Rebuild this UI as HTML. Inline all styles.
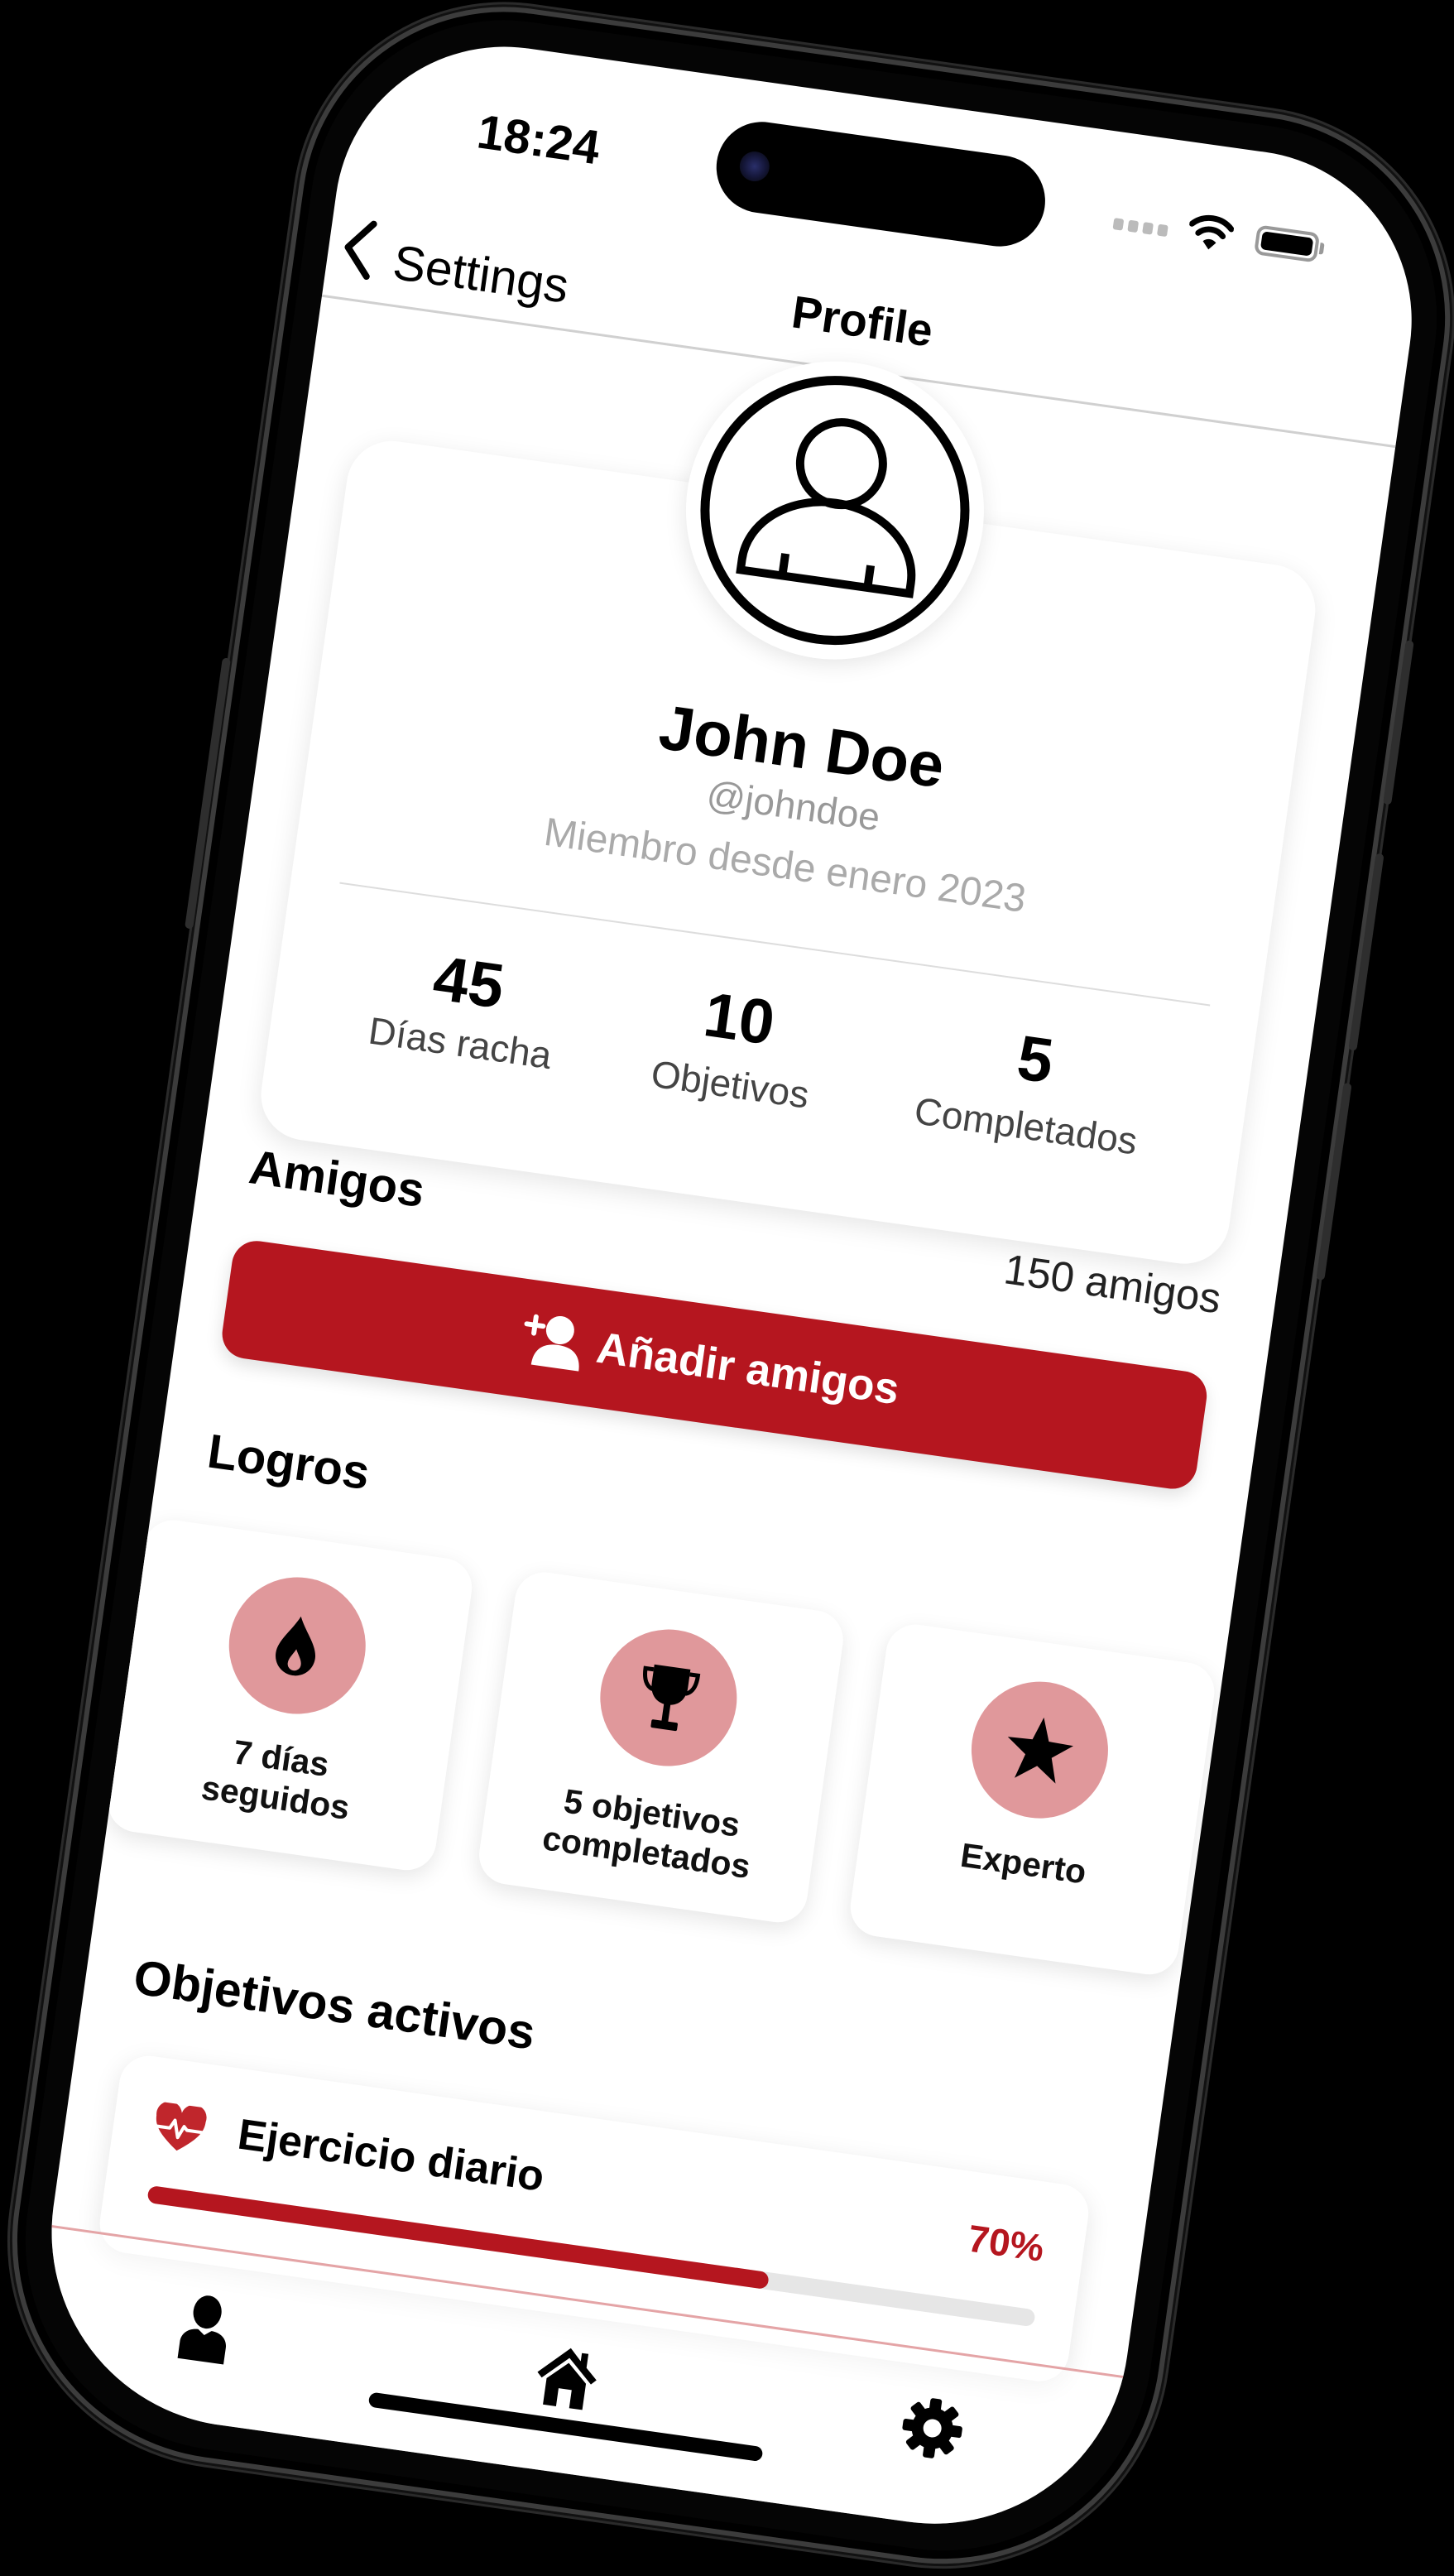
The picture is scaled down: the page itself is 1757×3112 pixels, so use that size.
<!DOCTYPE html>
<html><head><meta charset="utf-8">
<style>
*{margin:0;padding:0;box-sizing:border-box}
html,body{width:1757px;height:3112px;background:#000;overflow:hidden}
body{position:relative;font-family:"Liberation Sans",sans-serif}
#rot{position:absolute;left:435px;top:30px;width:1310px;height:2895px;transform-origin:0 0;transform:rotate(8deg)}
#body{position:absolute;left:-46px;top:-48px;width:1402px;height:2990px;border-radius:250px 250px 270px 270px;background:#050505;border:6px solid #3c3c3c;box-shadow:0 0 0 3px #111,0 0 0 6px #2a2a2a, inset 0 0 0 10px #000}
.btn{position:absolute;background:#2e2e2e;border-radius:6px}
#scr{position:absolute;left:0;top:0;width:1310px;height:2895px;border-radius:205px 205px 235px 235px;background:#fff;overflow:hidden}
.t{position:absolute;white-space:nowrap;line-height:1}
.c{text-align:center}
.b{font-weight:bold}
.card{position:absolute;background:#fff;box-shadow:0 8px 30px rgba(0,0,0,0.10);}
.ach{position:absolute;top:1820px;width:400px;height:380px;border-radius:36px;background:#fff;box-shadow:0 8px 26px rgba(0,0,0,0.10)}
.ach .circ{position:absolute;left:118px;top:47px;width:165px;height:165px;border-radius:50%;background:#e0989b}
.ach .lbl{position:absolute;left:0;width:400px;text-align:center;font-weight:bold;font-size:41px;line-height:48px;color:#111}
</style></head><body>
<div id="rot">
 <div id="body"></div>
 <div class="btn" style="left:1355px;top:560px;width:10px;height:200px"></div>
 <div class="btn" style="left:1355px;top:820px;width:10px;height:240px"></div>
 <div class="btn" style="left:1355px;top:1100px;width:10px;height:240px"></div>
 <div class="btn" style="left:-58px;top:780px;width:10px;height:330px"></div>
 <div id="scr">
  <div class="t c b" style="left:133px;width:200px;top:79px;font-size:58px;color:#000">18:24</div>
  <div style="position:absolute;left:450px;top:48px;width:400px;height:110px;border-radius:55px;background:#000"></div>
  <div style="position:absolute;left:478px;top:85px;width:36px;height:36px;border-radius:50%;background:radial-gradient(circle,#2a2f6a 0,#15173a 50%,#050505 100%)"></div>
  <div style="position:absolute;left:935px;top:104px;width:70px;height:14px">
   <span style="position:absolute;left:0;width:12px;height:14px;background:#bbb;border-radius:3px"></span>
   <span style="position:absolute;left:18px;width:12px;height:14px;background:#bbb;border-radius:3px"></span>
   <span style="position:absolute;left:36px;width:12px;height:14px;background:#bbb;border-radius:3px"></span>
   <span style="position:absolute;left:54px;width:12px;height:14px;background:#bbb;border-radius:3px"></span>
  </div>
  <svg style="position:absolute;left:1026px;top:82px" width="54" height="46" viewBox="0 0 54 46">
   <path d="M3 16 A34 34 0 0 1 51 16" fill="none" stroke="#000" stroke-width="7" stroke-linecap="round"/>
   <path d="M12 26 A21 21 0 0 1 42 26" fill="none" stroke="#000" stroke-width="7" stroke-linecap="round"/>
   <path d="M19 35 L27 44 L35 35 A11 11 0 0 0 19 35Z" fill="#000"/>
  </svg>
  <div style="position:absolute;left:1108px;top:88px;width:76px;height:36px;border:4px solid #999;border-radius:11px;padding:3px"><div style="width:100%;height:100%;background:#000;border-radius:6px"></div></div>
  <div style="position:absolute;left:1186px;top:99px;width:5px;height:14px;background:#999;border-radius:0 3px 3px 0"></div>
  <svg style="position:absolute;left:16px;top:232px" width="40" height="72" viewBox="0 0 40 72"><path d="M34 4 L7 36 L34 68" fill="none" stroke="#000" stroke-width="8" stroke-linecap="round" stroke-linejoin="round"/></svg>
  <div class="t" style="left:80px;top:249px;font-size:59px;color:#000">Settings</div>
  <div class="t c b" style="left:451px;width:400px;top:243px;font-size:55px;color:#000">Profile</div>
  <div style="position:absolute;left:0;top:329px;width:1310px;height:3px;background:#d0d0d0"></div>
  <div class="card" style="left:61px;top:492px;width:1181px;height:852px;border-radius:55px"></div>
  <div style="position:absolute;left:470px;top:321px;width:360px;height:360px;border-radius:50%;background:#fff;box-shadow:0 6px 26px rgba(0,0,0,0.10)"></div>
  <svg style="position:absolute;left:470px;top:321px" width="360" height="360" viewBox="0 0 360 360">
   <circle cx="180" cy="180" r="157" fill="none" stroke="#000" stroke-width="11"/>
   <circle cx="180" cy="123" r="50" fill="none" stroke="#000" stroke-width="10"/>
   <path d="M77 267 V254 A103 83 0 0 1 283 254 V267 Z" fill="none" stroke="#000" stroke-width="10" stroke-linejoin="miter"/>
   <path d="M128 240 V267 M232 240 V267" stroke="#000" stroke-width="10"/>
  </svg>
  <div class="t c b" style="left:250px;width:800px;top:752px;font-size:76px;color:#000">John Doe</div>
  <div class="t c" style="left:250px;width:800px;top:838px;font-size:46px;color:#999">@johndoe</div>
  <div class="t c" style="left:250px;width:800px;top:911px;font-size:48px;color:#aaa">Miembro desde enero 2023</div>
  <div style="position:absolute;left:120px;top:1029px;width:1062px;height:2px;background:#ddd"></div>
  <div class="t c b" style="left:141px;width:300px;top:1090px;font-size:76px;color:#000">45</div>
  <div class="t c" style="left:141px;width:300px;top:1178px;font-size:46px;color:#444">Días racha</div>
  <div class="t c b" style="left:471px;width:300px;top:1088px;font-size:76px;color:#000">10</div>
  <div class="t c" style="left:471px;width:300px;top:1182px;font-size:46px;color:#444">Objetivos</div>
  <div class="t c b" style="left:832px;width:300px;top:1087px;font-size:76px;color:#000">5</div>
  <div class="t c" style="left:832px;width:300px;top:1182px;font-size:46px;color:#444">Completados</div>
  <div class="t b" style="left:60px;top:1356px;font-size:58px;color:#000">Amigos</div>
  <div class="t" style="right:66px;top:1354px;font-size:51px;color:#222">150 amigos</div>
  <div style="position:absolute;left:55px;top:1472px;width:1189px;height:143px;border-radius:30px;background:#b5161f;box-shadow:0 8px 20px rgba(0,0,0,0.12)"></div>
  <svg style="position:absolute;left:412px;top:1508px" width="84" height="70" viewBox="0 0 84 70">
   <path d="M6 18 H26 M16 8 V28" stroke="#fff" stroke-width="6" stroke-linecap="round"/>
   <circle cx="47" cy="20" r="17" fill="#fff"/>
   <path d="M18 66 C18 46 30 38 47 38 C64 38 76 46 76 66 Z" fill="#fff"/>
  </svg>
  <div class="t b" style="left:506px;top:1516px;font-size:53px;color:#fff">Añadir amigos</div>
  <div class="t b" style="left:58px;top:1703px;font-size:58px;color:#000">Logros</div>
  <div class="ach" style="left:-3px">
   <div class="circ"></div>
   <svg style="position:absolute;left:174px;top:94px" width="52" height="72" viewBox="0 0 52 72"><path fill-rule="evenodd" fill="#000" d="M26 0 C34 18 50 32 50 48 A24 24 0 0 1 2 48 C2 32 18 18 26 0 Z M26 40 C30 48 34 52 34 58 A8 8 0 0 1 18 58 C18 52 22 48 26 40 Z"/></svg>
   <div class="lbl" style="top:243px">7 días<br>seguidos</div>
  </div>
  <div class="ach" style="left:450px">
   <div class="circ"></div>
   <svg style="position:absolute;left:164px;top:90px" width="72" height="82" viewBox="0 0 72 82">
    <path d="M14 2 H58 V24 C58 40 48 48 36 48 C24 48 14 40 14 24 Z" fill="#000"/>
    <path d="M14 8 H4 C4 24 10 30 16 32 M58 8 H68 C68 24 62 30 56 32" fill="none" stroke="#000" stroke-width="5"/>
    <rect x="32" y="46" width="8" height="24" fill="#000"/>
    <rect x="20" y="68" width="32" height="10" rx="2" fill="#000"/>
   </svg>
   <div class="lbl" style="top:246px">5 objetivos<br>completados</div>
  </div>
  <div class="ach" style="left:903px">
   <div class="circ"></div>
   <svg style="position:absolute;left:158px;top:88px" width="84" height="82" viewBox="0 0 84 82"><path d="M42 2 L52 30 L82 31 L58 49 L67 79 L42 61 L17 79 L26 49 L2 31 L32 30 Z" fill="#000"/></svg>
   <div class="lbl" style="top:244px">Experto</div>
  </div>
  <div class="t b" style="left:58px;top:2344px;font-size:59px;color:#000">Objetivos activos</div>
  <div class="card" style="left:58px;top:2465px;width:1182px;height:240px;border-radius:36px"></div>
  <svg style="position:absolute;left:106px;top:2518px" width="64" height="58" viewBox="0 0 64 58">
   <path d="M32 56 C10 40 2 30 2 17 A15 15 0 0 1 32 10 A15 15 0 0 1 62 17 C62 30 54 40 32 56 Z" fill="#c0262c"/>
   <path d="M4 30 H20 L25 20 L31 40 L37 26 L41 30 H60" fill="none" stroke="#fff" stroke-width="4" stroke-linejoin="round"/>
  </svg>
  <div class="t b" style="left:209px;top:2518px;font-size:52px;color:#000">Ejercicio diario</div>
  <div class="t b" style="right:118px;top:2522px;font-size:46px;color:#b5161f">70%</div>
  <div style="position:absolute;left:111px;top:2620px;width:1082px;height:21px;border-radius:11px;background:#e6e6e6"></div>
  <div style="position:absolute;left:111px;top:2620px;width:757px;height:21px;border-radius:11px;background:#b5161f"></div>
  <div style="position:absolute;left:0;top:2686px;width:1310px;height:240px;background:rgba(255,255,255,0.55)"></div>
  <div style="position:absolute;left:0;top:2684px;width:1310px;height:3px;background:#e4a4a6"></div>
  <svg style="position:absolute;left:170px;top:2742px" width="64" height="84" viewBox="0 0 64 84">
   <ellipse cx="32" cy="20" rx="17" ry="20" fill="#000"/>
   <path d="M4 80 V60 C4 48 14 42 24 42 L32 48 L40 42 C50 42 60 48 60 60 V80 Z" fill="#000"/>
  </svg>
  <svg style="position:absolute;left:605px;top:2740px" width="76" height="78" viewBox="0 0 76 78">
   <path d="M38 4 L2 38 L8 44 L38 16 L68 44 L74 38 L60 25 V8 H52 V18 Z" fill="#000"/>
   <path d="M14 44 L38 22 L62 44 V76 H46 V54 H30 V76 H14 Z" fill="#000"/>
  </svg>
  <svg style="position:absolute;left:1051px;top:2741px" width="76" height="76" viewBox="0 0 76 76">
   <g fill="#000"><circle cx="38" cy="38" r="25"/>
   <rect x="31" y="2" width="14" height="72" rx="3"/>
   <rect x="31" y="2" width="14" height="72" rx="3" transform="rotate(45 38 38)"/>
   <rect x="31" y="2" width="14" height="72" rx="3" transform="rotate(90 38 38)"/>
   <rect x="31" y="2" width="14" height="72" rx="3" transform="rotate(135 38 38)"/></g>
   <circle cx="38" cy="38" r="11" fill="#fff"/>
  </svg>
  <div style="position:absolute;left:410px;top:2830px;width:480px;height:18px;border-radius:9px;background:#000"></div>
 </div>
</div>
</body></html>
